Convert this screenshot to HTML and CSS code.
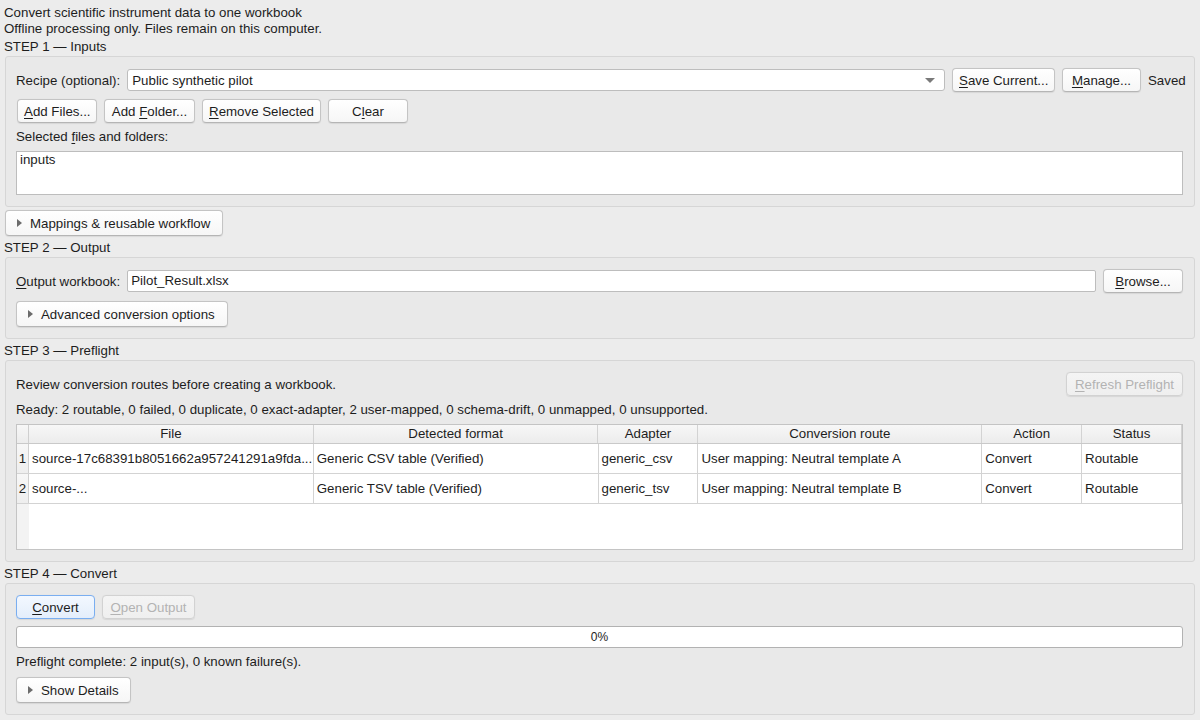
FILE: index.html
```html
<!DOCTYPE html>
<html>
<head>
<meta charset="utf-8">
<link rel="stylesheet" href="styles.css">
</head>
<body>
<div class="win">
  <div class="line">Convert scientific instrument data to one workbook</div>
  <div class="line">Offline processing only. Files remain on this computer.</div>
  <div class="step first">STEP 1 — Inputs</div>
  <div class="group g1">
    <div class="row">
      <span class="lbl">Recipe (optional):</span>
      <div class="combo"><span>Public synthetic pilot</span><span class="caret"></span></div>
      <button class="btn w-save"><u>S</u>ave Current...</button>
      <button class="btn w-manage"><u>M</u>anage...</button>
      <span class="saved">Saved</span>
    </div>
    <div class="row r2">
      <button class="btn w-addfiles"><u>A</u>dd Files...</button>
      <button class="btn w-addfolder">Add <u>F</u>older...</button>
      <button class="btn w-remove"><u>R</u>emove Selected</button>
      <button class="btn w-clear">C<u>l</u>ear</button>
    </div>
    <div class="caption">Selected <u>f</u>iles and folders:</div>
    <div class="textarea">inputs</div>
  </div>
  <button class="btn disc mappings"><span class="tri"></span>Mappings &amp; reusable workflow</button>

  <div class="step">STEP 2 — Output</div>
  <div class="group g2">
    <div class="row">
      <span class="lbl"><u>O</u>utput workbook:</span>
      <div class="input">Pilot_Result.xlsx</div>
      <button class="btn w-browse"><u>B</u>rowse...</button>
    </div>
    <button class="btn disc adv"><span class="tri"></span>Advanced conversion options</button>
  </div>

  <div class="step">STEP 3 — Preflight</div>
  <div class="group g3">
    <div class="row between">
      <span class="lbl">Review conversion routes before creating a workbook.</span>
      <button class="btn w-refresh" disabled><u>R</u>efresh Preflight</button>
    </div>
    <div class="ready">Ready: 2 routable, 0 failed, 0 duplicate, 0 exact-adapter, 2 user-mapped, 0 schema-drift, 0 unmapped, 0 unsupported.</div>
    <div class="table">
      <div class="thead">
        <div class="corner"></div>
        <div class="th c-file">File</div>
        <div class="th c-fmt">Detected format</div>
        <div class="th c-ad">Adapter</div>
        <div class="th c-route">Conversion route</div>
        <div class="th c-act">Action</div>
        <div class="th c-st">Status</div>
      </div>
      <div class="tbody">
        <div class="tr">
          <div class="rh">1</div>
          <div class="td c-file">source-17c68391b8051662a957241291a9fda...</div>
          <div class="td c-fmt">Generic CSV table (Verified)</div>
          <div class="td c-ad">generic_csv</div>
          <div class="td c-route">User mapping: Neutral template A</div>
          <div class="td c-act">Convert</div>
          <div class="td c-st">Routable</div>
        </div>
        <div class="tr">
          <div class="rh">2</div>
          <div class="td c-file">source-...</div>
          <div class="td c-fmt">Generic TSV table (Verified)</div>
          <div class="td c-ad">generic_tsv</div>
          <div class="td c-route">User mapping: Neutral template B</div>
          <div class="td c-act">Convert</div>
          <div class="td c-st">Routable</div>
        </div>
        <div class="filler"><div class="rh-fill"></div></div>
      </div>
    </div>
  </div>

  <div class="step">STEP 4 — Convert</div>
  <div class="group g4">
    <div class="row">
      <button class="btn default w-convert"><u>C</u>onvert</button>
      <button class="btn w-open" disabled><u>O</u>pen Output</button>
    </div>
    <div class="progress">0%</div>
    <div class="status">Preflight complete: 2 input(s), 0 known failure(s).</div>
    <button class="btn disc details"><span class="tri"></span>Show Details</button>
  </div>
</div>
</body>
</html>
```
FILE: styles.css
```css
* { box-sizing: border-box; }
html, body {
  margin: 0;
  padding: 0;
  background: #ececec;
  width: 1200px;
  height: 720px;
  overflow: hidden;
}
body {
  font-family: "Liberation Sans", Arial, sans-serif;
  font-size: 13.3px;
  color: #1d1d1d;
}
.win {
  padding: 4px 0 0 0;
  display: flex;
  flex-direction: column;
}
.line, .step {
  line-height: 16px;
  height: 16px;
  padding: 1px 0 0 4px;
  white-space: nowrap;
}
.step {
  margin-top: 3px;
  margin-bottom: 2px;
}
.step.first { margin-top: 2px; }
.group {
  margin: 0 5px;
  border: 1px solid #d6d6d6;
  border-radius: 3px;
  background: #e9e9e9;
  padding: 11px 11px 11px 10px;
  display: flex;
  flex-direction: column;
}
.row {
  display: flex;
  align-items: center;
  gap: 7px;
  height: 24px;
}
.row.between { justify-content: space-between; }
.r2 { margin-top: 7px; }
.lbl { white-space: nowrap; }
u { text-decoration: underline; text-underline-offset: 2px; }

.btn {
  font: inherit;
  color: #1d1d1d;
  height: 24px;
  padding: 0 6px;
  border: 1px solid #c4c4c4;
  border-bottom-color: #b5b5b5;
  border-radius: 4px;
  background: linear-gradient(#ffffff, #f6f6f6);
  box-shadow: 0 0.5px 1px rgba(0,0,0,0.08);
  white-space: nowrap;
  flex: none;
  text-align: center;
}
.btn[disabled] { color: #b3b3b3; border-color: #d2d2d2; background: linear-gradient(#f4f4f4, #efefef); }
.btn.default {
  border-color: #7aaef0;
  background: linear-gradient(#f3f8ff, #e4eefb);
}
.w-save { width: 103px; }
.w-manage { width: 79px; }
.w-addfiles { width: 80px; margin-left: 1px; }
.w-addfolder { width: 91px; }
.w-remove { width: 119px; }
.w-clear { width: 80px; }
.w-browse { width: 80px; }
.w-refresh { width: 117px; }
.w-convert { width: 79px; }
.w-open { width: 93px; }

.combo {
  flex: 1;
  height: 22px;
  border: 1px solid #bdbdbd;
  border-radius: 3px;
  background: #fff;
  display: flex;
  align-items: center;
  justify-content: space-between;
  padding: 0 8px 0 4px;
}
.caret {
  width: 0; height: 0;
  border-left: 5px solid transparent;
  border-right: 5px solid transparent;
  border-top: 5px solid #7a7a7a;
  margin-right: 1px;
}
.saved { white-space: nowrap; width: 35px; flex: none; }

.caption {
  margin-top: 6px;
  line-height: 16px;
  height: 16px;
}
.textarea {
  margin-top: 6px;
  height: 44px;
  background: #fff;
  border: 1px solid #bdbdbd;
  padding: 0 3px;
  line-height: 15px;
}

.disc {
  display: flex;
  align-items: center;
  height: 26px;
  text-align: left;
  padding-left: 11px;
}
.tri {
  width: 0; height: 0;
  border-top: 4px solid transparent;
  border-bottom: 4px solid transparent;
  border-left: 5px solid #6c6c6c;
  margin-right: 8px;
}
.mappings { margin: 3px 0 0 5px; width: 218px; }
.adv { margin-top: 8px; width: 212px; }
.details { margin-top: 7px; width: 115px; }

.input {
  flex: 1;
  height: 22px;
  border: 1px solid #bdbdbd;
  border-radius: 2px;
  background: #fff;
  padding: 0 3px;
  line-height: 20px;
}

.ready {
  margin-top: 6px;
  line-height: 16px;
  height: 16px;
  white-space: nowrap;
}
.table {
  margin-top: 6px;
  height: 126px;
  border: 1px solid #c4c4c4;
  background: #fff;
  display: flex;
  flex-direction: column;
}
.thead {
  display: flex;
  height: 19px;
  background: linear-gradient(#f7f7f7, #ececec);
  border-bottom: 1px solid #c9c9c9;
  flex: none;
}
.corner { width: 12px; border-right: 1px solid #cfcfcf; }
.th {
  text-align: center;
  line-height: 18px;
  border-right: 1px solid #d3d3d3;
}
.c-file { width: 285px; }
.c-fmt { width: 285px; }
.c-ad { width: 100px; }
.c-route { width: 284px; }
.c-act { width: 100px; }
.c-st { width: 100px; }
.tbody { flex: 1; display: flex; flex-direction: column; }
.tr {
  display: flex;
  height: 30px;
  border-bottom: 1px solid #d3d3d3;
  flex: none;
}
.rh {
  width: 12px;
  background: linear-gradient(#f7f7f7, #eeeeee);
  border-right: 1px solid #cfcfcf;
  line-height: 29px;
  text-align: center;
  flex: none;
}
.td {
  line-height: 29px;
  padding-left: 3px;
  border-right: 1px solid #d3d3d3;
  white-space: nowrap;
  overflow: hidden;
}
.filler { flex: 1; display: flex; }
.rh-fill { width: 12px; background: #f3f3f3; }

.progress {
  margin-top: 7px;
  height: 22px;
  border: 1px solid #b2b2b2;
  border-radius: 3px;
  background: #fff;
  text-align: center;
  line-height: 20px;
  font-size: 12px;
}
.status {
  margin-top: 6px;
  line-height: 16px;
  height: 16px;
}
```
